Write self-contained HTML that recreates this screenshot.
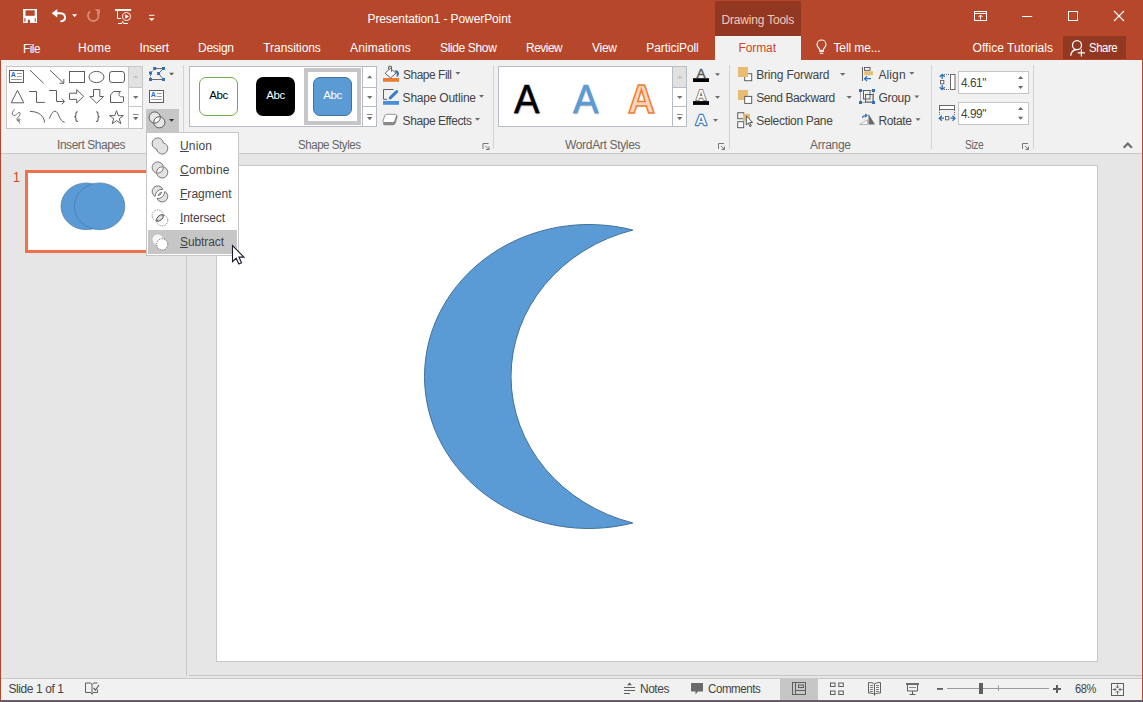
<!DOCTYPE html>
<html><head><meta charset="utf-8"><title>Presentation1 - PowerPoint</title>
<style>
html,body{margin:0;padding:0;}
body{width:1143px;height:702px;overflow:hidden;position:relative;background:#e6e6e6;font-family:"Liberation Sans",sans-serif;}
.b{position:absolute;box-sizing:border-box;}
.t{position:absolute;white-space:pre;font-family:"Liberation Sans",sans-serif;}
.t u{text-decoration:underline;text-underline-offset:1px;}
svg.ov{position:absolute;left:0;top:0;}
.wa{position:absolute;font-family:"Liberation Sans",sans-serif;}

</style></head>
<body>
<!-- title + tabs -->
<div class="b" style="left:0;top:0;width:1143px;height:60px;background:#b7472a"></div>
<div class="b" style="left:715px;top:1px;width:86px;height:35px;background:#923822"></div>
<div class="b" style="left:715px;top:36px;width:86px;height:24px;background:#f1f1f1"></div>
<div class="b" style="left:1063px;top:36px;width:63px;height:23px;background:#923822"></div>
<!-- ribbon -->
<div class="b" style="left:0;top:60px;width:1143px;height:93px;background:#f1f1f1"></div>
<div class="b" style="left:0;top:153px;width:1143px;height:1px;background:#c9c9c9"></div>
<!-- workspace -->
<div class="b" style="left:186px;top:154px;width:1px;height:522px;background:#c6c6c6"></div>
<div class="b" style="left:189px;top:675px;width:953px;height:1px;background:#c6c6c6"></div>
<div class="b" style="left:216px;top:165px;width:882px;height:497px;background:#fff;border:1px solid #c8c8c8"></div>
<!-- thumbnail -->
<div class="b" style="left:25px;top:170px;width:141px;height:83px;background:#fff;border:3px solid #f0704a"></div>
<!-- status bar -->
<div class="b" style="left:0;top:679px;width:1143px;height:21px;background:#f1f1f1"></div>
<div class="b" style="left:0;top:678px;width:1143px;height:1px;background:#c9c9c9"></div>
<div class="b" style="left:780px;top:679px;width:38px;height:21px;background:#c6c6c6"></div>
<div class="b" style="left:0;top:700px;width:1143px;height:1px;background:#b7472a"></div>
<div class="b" style="left:0;top:701px;width:1143px;height:1px;background:#1b6ca3"></div>
<!-- window borders -->
<div class="b" style="left:0;top:0;width:1px;height:701px;background:#b7472a"></div>
<div class="b" style="left:1142px;top:0;width:1px;height:701px;background:#b7472a"></div>
<!-- group separators -->
<div class="b" style="left:183px;top:65px;width:1px;height:84px;background:#d4d4d4"></div>
<div class="b" style="left:493px;top:65px;width:1px;height:84px;background:#d4d4d4"></div>
<div class="b" style="left:729px;top:65px;width:1px;height:84px;background:#d4d4d4"></div>
<div class="b" style="left:931px;top:65px;width:1px;height:84px;background:#d4d4d4"></div>
<div class="b" style="left:1033px;top:65px;width:1px;height:84px;background:#d4d4d4"></div>
<!-- insert shapes gallery -->
<div class="b" style="left:6px;top:66px;width:137px;height:63px;background:#fff;border:1px solid #c6c6c6"></div>
<div class="b" style="left:128px;top:66px;width:15px;height:63px;border:1px solid #c6c6c6;background:#fff"></div>
<div class="b" style="left:129px;top:67px;width:13px;height:20px;background:#e1e1e1"></div>
<div class="b" style="left:128px;top:87px;width:15px;height:1px;background:#c6c6c6"></div>
<div class="b" style="left:128px;top:106px;width:15px;height:1px;background:#c6c6c6"></div>
<!-- merge button -->
<div class="b" style="left:146px;top:109px;width:33px;height:24px;background:#c6c6c6"></div>
<!-- shape styles gallery -->
<div class="b" style="left:189px;top:66px;width:188px;height:61px;background:#fff;border:1px solid #b6bcc3"></div>
<div class="b" style="left:362px;top:66px;width:15px;height:61px;border:1px solid #b6bcc3;background:#fff"></div>
<div class="b" style="left:362px;top:87px;width:15px;height:1px;background:#b6bcc3"></div>
<div class="b" style="left:362px;top:106px;width:15px;height:1px;background:#b6bcc3"></div>
<div class="b" style="left:199px;top:77px;width:39px;height:39px;background:#fff;border:1px solid #70ad47;border-radius:7px"></div>
<div class="b" style="left:256px;top:77px;width:39px;height:39px;background:#000;border-radius:7px"></div>
<div class="b" style="left:304px;top:68px;width:57px;height:57px;border:4px solid #c6c6c6;background:#fff"></div>
<div class="b" style="left:313px;top:77px;width:39px;height:39px;background:#5b9bd5;border:1px solid #41719c;border-radius:7px"></div>
<!-- wordart gallery -->
<div class="b" style="left:498px;top:66px;width:189px;height:61px;background:#fff;border:1px solid #b6bcc3"></div>
<div class="b" style="left:672px;top:66px;width:15px;height:61px;border:1px solid #b6bcc3;background:#fff"></div>
<div class="b" style="left:673px;top:67px;width:13px;height:20px;background:#e1e1e1"></div>
<div class="b" style="left:672px;top:87px;width:15px;height:1px;background:#b6bcc3"></div>
<div class="b" style="left:672px;top:106px;width:15px;height:1px;background:#b6bcc3"></div>
<div class="wa" style="left:514.3px;top:73.5px;font-size:41px;line-height:50px;color:#000;-webkit-text-stroke:.5px #000;text-shadow:.5px 1px 1.5px rgba(0,0,0,.45);transform:scaleX(.93);transform-origin:0 0">A</div>
<div class="wa" style="left:572.5px;top:73.5px;font-size:41px;line-height:50px;color:#5b9bd5;-webkit-text-stroke:.5px #5b9bd5;text-shadow:.5px 1px 1.5px rgba(0,0,0,.35);transform:scaleX(.93);transform-origin:0 0">A</div>
<div class="wa" style="left:628.3px;top:73.5px;font-size:41px;line-height:50px;color:#f9d4bb;-webkit-text-stroke:1.6px #ed7d31;font-weight:bold;transform:scaleX(.91);transform-origin:0 0">A</div>
<!-- size inputs -->
<div class="b" style="left:958px;top:71px;width:71px;height:23px;background:#fff;border:1px solid #c6c6c6"></div>
<div class="b" style="left:958px;top:102px;width:71px;height:23px;background:#fff;border:1px solid #c6c6c6"></div>
<!-- dropdown menu -->
<div class="b" style="left:146px;top:132px;width:93px;height:124px;background:#fff;border:1px solid #c6c6c6"></div>
<div class="b" style="left:148px;top:230px;width:89px;height:24px;background:#c6c6c6"></div>

<svg class="ov" width="1143" height="702" viewBox="0 0 1143 702">
<!-- crescent -->
<path d="M632.8 230.05 A164.3 152 0 1 0 632.8 522.95 A166.3 152 0 0 1 632.8 230.05 Z" fill="#5b9bd5" stroke="#41719c" stroke-width="1" stroke-miterlimit="10"/>
<!-- thumb circles -->
<ellipse cx="86.2" cy="206.3" rx="25.2" ry="23.4" fill="#5b9bd5" stroke="#41719c" stroke-width=".6"/>
<ellipse cx="99.6" cy="206.3" rx="25.2" ry="23.4" fill="#5b9bd5" stroke="#41719c" stroke-width=".6"/>
<!-- save -->
<g>
<rect x="23" y="9" width="14" height="14" fill="#fff"/>
<rect x="25.500" y="10.300" width="9.200" height="5.500" fill="#b7472a"/>
<rect x="24.300" y="18.300" width="1.200" height="3.400" fill="#b7472a"/>
<rect x="34.700" y="18.300" width="1.100" height="3.400" fill="#b7472a"/>
<rect x="27.800" y="19.700" width="2.100" height="3.300" fill="#b7472a"/>
</g>
<!-- undo -->
<path d="M53.500 13.200h6.200c3.600 0 5.300 2 5.300 4.200 0 2.300-1.800 3.800-4.600 3.800" fill="none" stroke="#fff" stroke-width="2"/>
<path d="M51.700 13.200l5.600-4.300v8.600z" fill="#fff"/>
<path d="M72 14.300h5.200l-2.600 2.600z" fill="#fff"/>
<!-- redo (disabled) -->
<path d="M97.300 12.300a5.300 5.300 0 1 1-7-1" fill="none" stroke="#d68a76" stroke-width="1.800"/>
<path d="M94.600 9.200h5.300v5.200z" fill="#d68a76"/>
<!-- slideshow -->
<rect x="115" y="9" width="16.200" height="1.900" fill="#fff"/>
<path d="M117.500 11v7.500h3.600M118 23.500h3.600l1-2 1 2h4.400" fill="none" stroke="#fff" stroke-width="1"/>
<circle cx="126.600" cy="16.500" r="4" fill="#b7472a" stroke="#fff" stroke-width="1"/>
<path d="M125.300 14.200l3.700 2.300-3.700 2.300z" fill="#fff"/>
<!-- customize -->
<rect x="149" y="14.800" width="5.400" height="1" fill="#fff"/>
<path d="M148.800 18.200h5.800l-2.900 2.900z" fill="#fff"/>
<!-- window controls -->
<g fill="none" stroke="#fff" stroke-width="1">
<rect x="974.500" y="11.500" width="12" height="9"/>
<path d="M974.500 13.500h12M980.500 19.500v-4.500M978.500 17l2-2 2 2"/>
<path d="M1022 16.500h10.200"/>
<rect x="1068.500" y="11.500" width="9" height="9"/>
<path d="M1114 11l10 10M1124 11l-10 10" stroke-width="1.100"/>
</g>
<!-- bulb -->
<path d="M819.700 50.200c0-2.300-2.700-3-2.700-5.700a4.500 4.500 0 0 1 9 0c0 2.700-2.700 3.400-2.700 5.700z" fill="none" stroke="#fff" stroke-width="1.100"/>
<rect x="819.300" y="50.400" width="4.500" height="1.500" fill="#fff"/>
<rect x="819.800" y="52.800" width="3.500" height="1" fill="#fff"/>
<!-- person -->
<circle cx="1077" cy="45.200" r="4.500" fill="none" stroke="#fff" stroke-width="1.300"/>
<path d="M1070.700 55.700c.4-3.300 2.500-5.600 5.300-6.200" fill="none" stroke="#fff" stroke-width="1.300"/>
<path d="M1077.800 52.800h7.200M1081.400 49.200v7.200" fill="none" stroke="#fff" stroke-width="1.200"/>

<g fill="none" stroke="#5e5e5e" stroke-width="1">
<!-- row1 -->
<rect x="9.5" y="70.5" width="14" height="12" fill="#fff"/>
<path d="M17 73.5h4.800M17 76.5h4.800M11 79.5h10.800" stroke="#9a9a9a"/>
<path d="M30 70.2L43.7 83.3"/>
<path d="M50 70.2L63.5 83M63.8 79v4.3h-4.3"/>
<rect x="69.5" y="71.5" width="15" height="11"/>
<ellipse cx="96.5" cy="77" rx="7.5" ry="5.6"/>
<rect x="109.5" y="71.5" width="15" height="11" rx="2.5"/>
<!-- row2 -->
<path d="M17.500 90.300L23.800 102.800H11.200Z"/>
<path d="M29 91.500h7.500v10.900h8.400"/>
<path d="M49.100 90.500h7.400v11h7.600M61.800 98.700l2.800 2.800-2.800 2.800"/>
<path d="M69.500 93.200h7.200v-3.600l6.900 6.700-6.900 6.700v-3.600h-7.200z"/>
<path d="M93.500 89.500h6.300v7h3.700l-6.850 6.700-6.850-6.700h3.700z"/>
<path d="M113.600 91.500H120.600C118.200 92.800 118.400 96.800 121.500 96.800H123.500V101C123.500 102 122.800 102.500 122 102.500H110.500V95.100Z"/>
<!-- row3 -->
<path d="M14.400 109.300c-.8 1.800-2.400 3-2.200 4.600.2 1.500 1.800 1.900 3.300 1.300 1.500-.700 2.300-2.900 3.600-2.800 1.200.1 1.300 1.400.6 2.700-.900 1.700-2.900 2.900-2.700 4.700.2 1.600 2.100 1.800 2.800.6.600-1.100-.5-2.100-1.400-1.300-.900.800-.1 1.700.6 2.500.5.600.700 1.200.700 1.900" stroke-width=".9"/>
<path d="M29.900 111.500c8.500-.3 14.300 4.500 14.700 11"/>
<path d="M49.300 118.800C51 114.300 52.800 111.200 55 111.200C59 111.200 59.300 122.200 64.700 122.200"/>
<path d="M116.500 110.700l1.750 4.900h5.200l-4.150 3.100 1.550 5-4.350-3.050-4.350 3.050 1.550-5-4.150-3.100h5.200z"/>
</g>
<text x="10.8" y="77" font-family="Liberation Sans, sans-serif" font-size="7" font-weight="bold" fill="#2b6cc4">A</text>
<path d="M78 111.700c-1.700 0-2.100.600-2.100 1.800v1.700c0 1-.5 1.400-1.600 1.400 1.100 0 1.600.4 1.600 1.400v1.700c0 1.200.4 1.800 2.100 1.800" fill="none" stroke="#5e5e5e" stroke-width="1.100"/>
<path d="M95.900 111.700c1.700 0 2.100.600 2.100 1.800v1.700c0 1 .5 1.400 1.600 1.400-1.100 0-1.600.4-1.600 1.400v1.700c0 1.200-.4 1.800-2.100 1.800" fill="none" stroke="#5e5e5e" stroke-width="1.100"/>
<!-- scroll arrows -->
<path d="M133 78l2.700-2.700 2.700 2.700z" fill="#c0c0c0"/>
<path d="M133 96l2.700 2.900 2.700-2.900z" fill="#707070"/>
<path d="M132.800 114.500h5.800" stroke="#8a8a8a" stroke-width="1"/>
<path d="M133 117l2.700 3.200 2.700-3.200z" fill="#707070"/>
<!-- edit shape -->
<g>
<path d="M156 68.500h6.500M163.500 68.500l-5 5 5 6M152 79.500h10.500" fill="none" stroke="#6a6a6a" stroke-width="1"/>
<path d="M154.500 69l-4 4M150.500 74.500v4" fill="none" stroke="#6a6a6a" stroke-width="1" stroke-dasharray="1.500 1"/>
<g fill="#2f6fb5"><rect x="149" y="71.500" width="3" height="3"/><rect x="149" y="78" width="3" height="3"/><rect x="153.200" y="67" width="3" height="3"/><rect x="162" y="67" width="3" height="3"/><rect x="157.100" y="72" width="3" height="3"/><rect x="162" y="78" width="3" height="3"/></g>
<path d="M169 72.800h5.200l-2.600 2.800z" fill="#5e5e5e"/>
</g>
<!-- text box icon -->
<rect x="149.500" y="90.500" width="14" height="12" fill="#fff" stroke="#5e5e5e"/>
<path d="M157 93.5h4.800M157 96.5h4.800M151 99.5h10.800" stroke="#9a9a9a" fill="none"/>
<text x="150.8" y="97" font-family="Liberation Sans, sans-serif" font-size="7" font-weight="bold" fill="#2b6cc4">A</text>
<!-- merge shapes -->
<circle cx="154.7" cy="117.5" r="5.6" fill="#e6e6e6"/>
<circle cx="159.3" cy="122.3" r="5.6" fill="#e6e6e6"/>
<path d="M153.86 123.04A5.6 5.6 0 0 1 160.24 116.76A5.6 5.6 0 0 1 153.86 123.04Z" fill="#fafafa" stroke="none"/>
<circle cx="154.7" cy="117.5" r="5.6" fill="none" stroke="#5a5a5a"/>
<circle cx="159.3" cy="122.3" r="5.6" fill="none" stroke="#5a5a5a"/>
<path d="M169 119h5.200l-2.600 2.800z" fill="#333"/>

<!-- gallery scroll arrows: shape styles -->
<path d="M367 78.300l2.700-2.700 2.700 2.700z" fill="#6e6e6e"/>
<path d="M367 96l2.700 2.900 2.700-2.900z" fill="#707070"/>
<path d="M366.800 114.500h5.800" stroke="#8a8a8a" stroke-width="1"/>
<path d="M367 117l2.700 3.200 2.700-3.200z" fill="#707070"/>
<!-- wordart scroll -->
<path d="M677 78.300l2.700-2.700 2.700 2.700z" fill="#c0c0c0"/>
<path d="M677 96l2.700 2.900 2.700-2.900z" fill="#707070"/>
<path d="M676.800 114.500h5.800" stroke="#8a8a8a" stroke-width="1"/>
<path d="M677 117l2.700 3.200 2.700-3.200z" fill="#707070"/>
<!-- shape fill -->
<rect x="383" y="78" width="16" height="3.800" fill="#ed7d31"/>
<path d="M390.300 68.300l5.600 4.900-5.200 4.600-5.600-4.500z" fill="#fff" stroke="#5e5e5e" stroke-width="1"/>
<path d="M388.700 69.500v-3.200h2.700v5.500" fill="none" stroke="#5e5e5e" stroke-width="1"/>
<path d="M395.300 70c2.300.4 3.900 1.700 3.600 4.200-.2 1.400-1.200 2.300-2.300 3 .5-2.500.3-4-1.500-5.800z" fill="#2f6fb5"/>
<path d="M455.400 72h5l-2.500 2.800z" fill="#6a6a6a"/>
<!-- shape outline -->
<rect x="383" y="101" width="16" height="3.800" fill="#4a90d9"/>
<path d="M387 99.300h-3.500v-9.800h10" fill="none" stroke="#5e5e5e" stroke-width="1"/>
<path d="M390.500 97.600l6.200-6" stroke="#3b7fc4" stroke-width="3" stroke-linecap="round"/>
<path d="M388.500 99.600l.9-2.800 2 1.900z" fill="#3b7fc4"/>
<path d="M479 95h5l-2.500 2.800z" fill="#6a6a6a"/>
<!-- shape effects -->
<path d="M387.500 115h8.500c1.300 0 1.900.9 1.500 2.100l-1.800 6c-.4 1.300-1.300 2.100-2.700 2.100h-8.300c-1.300 0-1.900-.9-1.500-2.100l1.800-6c.4-1.300 1.200-2.100 2.500-2.100z" fill="#8a8a8a"/>
<path d="M387 114.300h8c1.300 0 1.800.8 1.400 1.900l-1.500 4.600c-.4 1.100-1.200 1.700-2.400 1.700h-8c-1.300 0-1.800-.8-1.400-1.900l1.500-4.600c.4-1.100 1.200-1.700 2.400-1.700z" fill="#fff" stroke="#777" stroke-width=".8"/>
<path d="M475 118h5l-2.500 2.800z" fill="#6a6a6a"/>
<!-- text fill / outline / effects -->
<rect x="693" y="78.200" width="16" height="3.800" fill="#000"/>
<text x="696.600" y="78" font-family="Liberation Sans, sans-serif" font-size="13.600" fill="#5a5a5a" stroke="#5a5a5a" stroke-width=".45">A</text>
<path d="M715 73.200h5l-2.500 2.700z" fill="#6a6a6a"/>
<rect x="693" y="101.100" width="16" height="3.800" fill="#000"/>
<text x="696" y="99.600" font-family="Liberation Sans, sans-serif" font-size="14" font-weight="bold" fill="#fff" stroke="#707070" stroke-width="1.700" style="paint-order:stroke">A</text>
<path d="M715 96.100h5l-2.500 2.700z" fill="#6a6a6a"/>
<text x="695.600" y="124.600" font-family="Liberation Sans, sans-serif" font-size="15.500" font-weight="bold" fill="#fff" stroke="#3b7fc4" stroke-width="2.400" stroke-linejoin="round" style="paint-order:stroke">A</text>
<path d="M713 119h5l-2.500 2.700z" fill="#6a6a6a"/>
<!-- bring forward -->
<rect x="744.700" y="73.700" width="7" height="7" fill="#fff" stroke="#5e5e5e"/>
<rect x="738" y="67" width="10" height="10" fill="#e9bc74"/>
<path d="M840 73h5.400l-2.700 2.800z" fill="#6a6a6a"/>
<!-- send backward -->
<rect x="738" y="90" width="10" height="10" fill="#e9bc74"/>
<rect x="744.700" y="96.400" width="7" height="7" fill="#fff" stroke="#5e5e5e"/>
<path d="M846.500 96h5.400l-2.700 2.800z" fill="#6a6a6a"/>
<!-- selection pane -->
<rect x="737.700" y="112.700" width="6" height="6" fill="none" stroke="#5e5e5e"/>
<rect x="737.700" y="121.700" width="6" height="6" fill="#fff" stroke="#5e5e5e"/>
<rect x="743" y="113.800" width="7" height="7" fill="#e9bc74"/>
<path d="M746.300 115.800v9.200l2.100-2 1.600 3.600 1.300-.6-1.600-3.500h2.900z" fill="#fff" stroke="#444" stroke-width=".9"/>
<!-- align -->
<path d="M862.500 67v14" stroke="#5e5e5e"/>
<rect x="864.500" y="67.500" width="5.500" height="2.800" fill="#fff" stroke="#5e5e5e"/>
<rect x="864.200" y="71.200" width="8.800" height="4" fill="#e9bc74"/>
<path d="M871 78.700h-6M867 76.300l-2.500 2.400 2.500 2.400" fill="none" stroke="#2f6fb5" stroke-width="1.200"/>
<path d="M909.300 72h5l-2.500 2.800z" fill="#6a6a6a"/>
<!-- group -->
<rect x="860.500" y="90.500" width="13" height="12" fill="none" stroke="#5e5e5e" stroke-dasharray="1 1"/>
<rect x="863.500" y="90.500" width="6.500" height="8.500" fill="none" stroke="#5e5e5e"/>
<rect x="865.500" y="94.500" width="7.500" height="7.500" fill="none" stroke="#5e5e5e"/>
<g fill="#2f6fb5"><rect x="859" y="89" width="3" height="3"/><rect x="872" y="89" width="3" height="3"/><rect x="859" y="101" width="3" height="3"/><rect x="872" y="101" width="3" height="3"/></g>
<path d="M914.300 95.400h5l-2.500 2.800z" fill="#6a6a6a"/>
<!-- rotate -->
<path d="M859.500 124.500h8v-4.700z" fill="#fff" stroke="#b5b5b5"/>
<path d="M868.500 113.800v10.800h6.500z" fill="#6a6a6a"/>
<path d="M862.500 118c0-1.600 1-2.400 3.500-2.400M865.300 114l1.800 1.600-1.800 1.600" fill="none" stroke="#2f6fb5" stroke-width="1.100"/>
<path d="M915.500 118.300h5l-2.500 2.800z" fill="#6a6a6a"/>
<!-- size icons -->
<rect x="950.500" y="74.500" width="4.500" height="15" fill="#fff" stroke="#6a6a6a"/>
<path d="M944 74.500h6M944 89.500h6" stroke="#6a6a6a" stroke-dasharray="1 1"/>
<rect x="940.500" y="80.500" width="3.300" height="3.300" fill="#fff" stroke="#6a6a6a"/>
<path d="M942.200 79v-4M939.700 76.800l2.500-2.500 2.500 2.500M942.200 85v4M939.700 87.200l2.500 2.500 2.500-2.500" fill="none" stroke="#2f6fb5" stroke-width="1.300"/>
<rect x="939.500" y="105.500" width="15" height="4" fill="#fff" stroke="#6a6a6a"/>
<path d="M939.500 110v5M954.500 110v5" stroke="#6a6a6a" stroke-dasharray="1 1"/>
<rect x="945.500" y="116.500" width="3.300" height="3.300" fill="#fff" stroke="#6a6a6a"/>
<path d="M944 118.200h-4M941.800 115.700l-2.500 2.500 2.500 2.500M950.300 118.200h4M952.500 115.700l2.500 2.500-2.500 2.500" fill="none" stroke="#2f6fb5" stroke-width="1.300"/>
<!-- spinners -->
<g fill="#6a6a6a">
<path d="M1018 79l2.600-3 2.600 3z"/><path d="M1018 86l2.600 3 2.600-3z"/>
<path d="M1018 110l2.600-3 2.600 3z"/><path d="M1018 116.800l2.600 3 2.600-3z"/>
</g>
<!-- dialog launchers -->
<g fill="none" stroke="#777" stroke-width="1">
<path d="M483 149v-5.500h5.500M485.500 146l3.500 3.500M489 146.500v3h-3"/>
<path d="M718.500 149v-5.500h5.500M721 146l3.500 3.500M724.500 146.500v3h-3"/>
<path d="M1022.500 149v-5.500h5.500M1025 146l3.500 3.500M1028.500 146.500v3h-3"/>
</g>
<!-- collapse caret -->
<path d="M1123.700 147.700l4.100-4.100 4.100 4.100" fill="none" stroke="#6a6a6a" stroke-width="2.1"/>

<!-- spell icon -->
<g fill="none" stroke="#5e5e5e" stroke-width="1">
<path d="M85.500 683v9.500h5.500l1 1.800 1-1.800h4.500v-3"/>
<path d="M85.500 683h5l1.500 1v8.500"/>
<path d="M92.500 684l1.500-1h3.500"/>
<path d="M93.500 688l2 2 3.500-5" stroke-width="1.200"/>
</g>
<!-- notes -->
<path d="M627 685.200l2.500-2.700 2.500 2.700z" fill="#5e5e5e"/>
<path d="M624 687.500h11M624 690.500h11M624 693.500h6" stroke="#5e5e5e" stroke-width="1"/>
<!-- comments -->
<path d="M691 683h12v8.500h-5l-2.500 3v-3h-4.500z" fill="#6a6a6a"/>
<!-- normal view -->
<g fill="none" stroke="#5e5e5e" stroke-width="1">
<rect x="792.500" y="682.500" width="13" height="12"/>
<path d="M795.500 682.500v12M795.500 690.500h10"/>
<rect x="798.500" y="685" width="5" height="2.500"/>
<!-- sorter -->
<rect x="830.500" y="683" width="4.500" height="3.500"/><rect x="838.800" y="683" width="4.500" height="3.500"/>
<rect x="830.500" y="691" width="4.500" height="3.500"/><rect x="838.800" y="691" width="4.500" height="3.500"/>
<!-- reading -->
<path d="M874.500 684c-1.500-1.200-3.500-1.500-6-1.500v10.500c2.500 0 4.500.3 6 1.500 1.500-1.200 3.500-1.500 6-1.500v-10.500c-2.500 0-4.500.3-6 1.500z"/>
<path d="M874.500 684v11.500"/>
<path d="M870 685.500h3M870 687.500h3M870 689.500h3M870 691.500h3M876 685.500h3M876 687.500h3M876 689.500h3M876 691.500h3" stroke-width=".8"/>
<!-- slideshow -->
<path d="M906 684h13" stroke-width="1.800"/>
<path d="M907.500 685v6h10v-6M912.500 691v3.500M909.500 694.500h6"/>
<path d="M909 687.500h7" stroke="#8a8a8a"/>
</g>
<!-- zoom -->
<rect x="937" y="688" width="6" height="1.800" fill="#5e5e5e"/>
<path d="M947 688.500h102" stroke="#9a9a9a" stroke-width="1"/>
<path d="M998.500 685.500v5.500" stroke="#9a9a9a" stroke-width="1"/>
<rect x="979" y="683" width="4" height="11" fill="#5e5e5e"/>
<path d="M1053 689h8M1057 685v8" stroke="#5e5e5e" stroke-width="2"/>
<!-- fit -->
<g fill="none" stroke="#5e5e5e" stroke-width="1">
<rect x="1111.500" y="683.500" width="12" height="12"/>
<path d="M1117.500 684.500v3.500M1116 686.500l1.500 1.500 1.500-1.500M1117.500 694.500v-3.500M1116 692.500l1.500-1.500 1.500 1.500M1112.500 689.500h3.500M1114.500 688l1.500 1.500-1.500 1.500M1122.500 689.500h-3.500M1120.500 688l-1.500 1.500 1.500 1.500" stroke-width=".9"/>
</g>

<path d="M163.27 142.90A5.6 5.6 0 1 0 156.63 149.00A5.6 5.6 0 1 0 163.27 142.90Z" fill="#e2e2e2" stroke="#777" stroke-width="1"/>
<path d="M163.27 166.90A5.6 5.6 0 1 0 156.63 173.00A5.6 5.6 0 1 0 163.27 166.90Z" fill="#e2e2e2" stroke="none"/>
<path d="M156.63 173.00A5.6 5.6 0 0 1 163.27 166.90A5.6 5.6 0 0 1 156.63 173.00Z" fill="#fafafa" stroke="none"/>
<circle cx="157.7" cy="167.5" r="5.6" fill="none" stroke="#777"/>
<circle cx="162.2" cy="172.4" r="5.6" fill="none" stroke="#777"/>
<path d="M162.86 189.33A5.6 5.6 0 1 0 155.10 196.46A7.1 7.1 0 0 1 162.86 189.33Z" fill="#e2e2e2" stroke="#777" stroke-width="1"/>
<path d="M157.04 198.57A5.6 5.6 0 1 0 164.80 191.44A7.1 7.1 0 0 1 157.04 198.57Z" fill="#e2e2e2" stroke="#777" stroke-width="1"/>
<path d="M158.18 195.57A4.1 4.1 0 0 1 161.72 192.33A4.1 4.1 0 0 1 158.18 195.57Z" fill="#e2e2e2" stroke="#777" stroke-width="1"/>
<circle cx="157.7" cy="215.5" r="5.6" fill="none" stroke="#777" stroke-dasharray="1.2 1.3"/>
<circle cx="162.2" cy="220.4" r="5.6" fill="none" stroke="#777" stroke-dasharray="1.2 1.3"/>
<path d="M156.63 221.00A5.6 5.6 0 0 1 163.27 214.90A5.6 5.6 0 0 1 156.63 221.00Z" fill="#e2e2e2" stroke="#555"/>
<circle cx="157.7" cy="239.5" r="5.6" fill="#f6f6f6" stroke="#c0c0c0" stroke-width=".8"/>
<circle cx="162.2" cy="244.4" r="5.6" fill="#fff" stroke="#666" stroke-dasharray="1.2 1.3"/>
<!-- cursor -->
<path d="M232.500 245.500v16.200l3.700-3.500 2.600 5.800 2.700-1.200-2.600-5.700h5z" fill="#fff" stroke="#1a1a2e" stroke-width="1.100" stroke-linejoin="miter"/>

</svg>


<div class="t" style="left:367.5px;top:13.0px;font-size:12px;line-height:12px;color:#fff;letter-spacing:-0.10px;">Presentation1 - PowerPoint</div>
<div class="t" style="left:721.6px;top:14.0px;font-size:12px;line-height:12px;color:#f4c9b8;letter-spacing:-0.20px;">Drawing Tools</div>
<div class="t" style="left:22.5px;top:42.7px;font-size:12px;line-height:12px;color:#fff;letter-spacing:-0.45px;transform:scaleX(0.973);transform-origin:0 0;">File</div>
<div class="t" style="left:78.0px;top:42.0px;font-size:12px;line-height:12px;color:#fff;letter-spacing:0.33px;">Home</div>
<div class="t" style="left:139.5px;top:42.0px;font-size:12px;line-height:12px;color:#fff;letter-spacing:-0.10px;">Insert</div>
<div class="t" style="left:198.0px;top:42.0px;font-size:12px;line-height:12px;color:#fff;letter-spacing:-0.27px;">Design</div>
<div class="t" style="left:263.3px;top:42.0px;font-size:12px;line-height:12px;color:#fff;letter-spacing:-0.07px;">Transitions</div>
<div class="t" style="left:350.0px;top:42.0px;font-size:12px;line-height:12px;color:#fff;letter-spacing:0.16px;">Animations</div>
<div class="t" style="left:440.0px;top:42.0px;font-size:12px;line-height:12px;color:#fff;letter-spacing:-0.36px;">Slide Show</div>
<div class="t" style="left:526.3px;top:42.0px;font-size:12px;line-height:12px;color:#fff;letter-spacing:-0.45px;transform:scaleX(0.989);transform-origin:0 0;">Review</div>
<div class="t" style="left:592.0px;top:42.0px;font-size:12px;line-height:12px;color:#fff;letter-spacing:-0.27px;">View</div>
<div class="t" style="left:646.3px;top:42.0px;font-size:12px;line-height:12px;color:#fff;letter-spacing:-0.09px;">ParticiPoll</div>
<div class="t" style="left:738.6px;top:42.0px;font-size:12px;line-height:12px;color:#d04526;letter-spacing:-0.12px;">Format</div>
<div class="t" style="left:833.4px;top:42.0px;font-size:12px;line-height:12px;color:#fff;letter-spacing:-0.09px;">Tell me...</div>
<div class="t" style="left:972.6px;top:42.0px;font-size:12px;line-height:12px;color:#fff;letter-spacing:0.04px;">Office Tutorials</div>
<div class="t" style="left:1089.3px;top:42.0px;font-size:12px;line-height:12px;color:#fff;letter-spacing:-0.45px;transform:scaleX(0.949);transform-origin:0 0;">Share</div>
<div class="t" style="left:402.6px;top:68.8px;font-size:12px;line-height:12px;color:#444;letter-spacing:-0.45px;transform:scaleX(0.993);transform-origin:0 0;">Shape Fill</div>
<div class="t" style="left:402.6px;top:91.8px;font-size:12px;line-height:12px;color:#444;letter-spacing:-0.22px;">Shape Outline</div>
<div class="t" style="left:402.6px;top:114.8px;font-size:12px;line-height:12px;color:#444;letter-spacing:-0.43px;">Shape Effects</div>
<div class="t" style="left:756.2px;top:68.8px;font-size:12px;line-height:12px;color:#444;letter-spacing:-0.18px;">Bring Forward</div>
<div class="t" style="left:756.2px;top:91.8px;font-size:12px;line-height:12px;color:#444;letter-spacing:-0.42px;">Send Backward</div>
<div class="t" style="left:756.2px;top:114.8px;font-size:12px;line-height:12px;color:#444;letter-spacing:-0.31px;">Selection Pane</div>
<div class="t" style="left:878.4px;top:68.8px;font-size:12px;line-height:12px;color:#444;letter-spacing:0.13px;">Align</div>
<div class="t" style="left:878.4px;top:91.8px;font-size:12px;line-height:12px;color:#444;letter-spacing:-0.29px;">Group</div>
<div class="t" style="left:878.4px;top:114.8px;font-size:12px;line-height:12px;color:#444;letter-spacing:-0.35px;">Rotate</div>
<div class="t" style="left:961.0px;top:77.0px;font-size:12px;line-height:12px;color:#444;letter-spacing:-0.45px;transform:scaleX(0.984);transform-origin:0 0;">4.61&quot;</div>
<div class="t" style="left:961.0px;top:107.9px;font-size:12px;line-height:12px;color:#444;letter-spacing:-0.45px;transform:scaleX(0.984);transform-origin:0 0;">4.99&quot;</div>
<div class="t" style="left:56.9px;top:139.1px;font-size:12px;line-height:12px;color:#666;letter-spacing:-0.45px;transform:scaleX(0.999);transform-origin:0 0;">Insert Shapes</div>
<div class="t" style="left:298.4px;top:139.1px;font-size:12px;line-height:12px;color:#666;letter-spacing:-0.45px;transform:scaleX(0.958);transform-origin:0 0;">Shape Styles</div>
<div class="t" style="left:565.0px;top:139.1px;font-size:12px;line-height:12px;color:#666;letter-spacing:-0.33px;">WordArt Styles</div>
<div class="t" style="left:810.0px;top:139.1px;font-size:12px;line-height:12px;color:#666;letter-spacing:-0.28px;">Arrange</div>
<div class="t" style="left:964.5px;top:139.1px;font-size:12px;line-height:12px;color:#666;letter-spacing:-0.45px;transform:scaleX(0.850);transform-origin:0 0;">Size</div>
<div class="t" style="left:209.2px;top:89.7px;font-size:11.5px;line-height:11.5px;color:#000;letter-spacing:-0.36px;">Abc</div>
<div class="t" style="left:266.2px;top:89.7px;font-size:11.5px;line-height:11.5px;color:#fff;letter-spacing:-0.36px;">Abc</div>
<div class="t" style="left:323.2px;top:89.7px;font-size:11.5px;line-height:11.5px;color:#fff;letter-spacing:-0.36px;">Abc</div>
<div class="t" style="left:180.0px;top:139.8px;font-size:12px;line-height:12px;color:#444;letter-spacing:0.16px;"><u>U</u>nion</div>
<div class="t" style="left:180.0px;top:163.8px;font-size:12px;line-height:12px;color:#444;letter-spacing:0.24px;"><u>C</u>ombine</div>
<div class="t" style="left:180.0px;top:187.8px;font-size:12px;line-height:12px;color:#444;letter-spacing:0.02px;"><u>F</u>ragment</div>
<div class="t" style="left:180.0px;top:211.8px;font-size:12px;line-height:12px;color:#444;letter-spacing:-0.13px;"><u>I</u>ntersect</div>
<div class="t" style="left:180.0px;top:235.8px;font-size:12px;line-height:12px;color:#444;letter-spacing:-0.10px;"><u>S</u>ubtract</div>
<div class="t" style="left:8.4px;top:683.1px;font-size:12px;line-height:12px;color:#444;letter-spacing:-0.40px;">Slide 1 of 1</div>
<div class="t" style="left:640.4px;top:683.1px;font-size:12px;line-height:12px;color:#444;letter-spacing:-0.45px;transform:scaleX(0.995);transform-origin:0 0;">Notes</div>
<div class="t" style="left:707.8px;top:683.1px;font-size:12px;line-height:12px;color:#444;letter-spacing:-0.45px;transform:scaleX(0.962);transform-origin:0 0;">Comments</div>
<div class="t" style="left:1075.0px;top:683.1px;font-size:12px;line-height:12px;color:#444;letter-spacing:-0.45px;transform:scaleX(0.925);transform-origin:0 0;">68%</div>
<div class="t" style="left:12.8px;top:168.9px;font-size:15.5px;line-height:15.5px;color:#d24726;letter-spacing:-0.45px;transform:scaleX(0.812);transform-origin:0 0;">1</div>
</body></html>
